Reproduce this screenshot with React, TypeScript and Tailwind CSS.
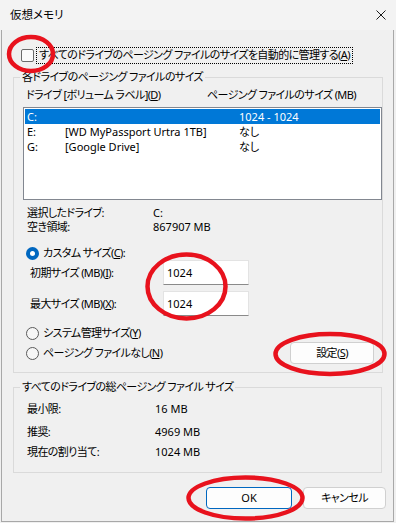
import React from 'react'

// 仮想メモリ dialog (Windows 11 style) with red annotation marks

const Key = ({ k }: { k: string }) => (
  <>
    (<span className="underline underline-offset-[1px]">{k}</span>)
  </>
)

function Radio({ checked }: { checked?: boolean }) {
  if (checked) {
    return (
      <span className="w-[13px] h-[13px] rounded-full bg-[#0067c0] flex items-center justify-center shrink-0">
        <span className="w-[5px] h-[5px] rounded-full bg-white" />
      </span>
    )
  }
  return <span className="w-[13px] h-[13px] rounded-full border border-[#5a5a5a] bg-[#f6f6f6] shrink-0" />
}

function GroupBox({ title, className, children }: { title: string; className: string; children: React.ReactNode }) {
  return (
    <fieldset className={`ml-[11px] w-[369px] border border-[#dadada] ${className}`}>
      <legend className="ml-[6px] px-[2px] h-[16px] leading-[16px]">{title}</legend>
      {children}
    </fieldset>
  )
}

const drives = [
  { d: 'C:', label: '', size: '1024 - 1024', selected: true },
  { d: 'E:', label: '[WD MyPassport Urtra 1TB]', size: 'なし' },
  { d: 'G:', label: '[Google Drive]', size: 'なし' },
]

export default function App() {
  return (
    <div className="relative w-[396px] h-[523px] bg-[#f0f0f0] text-black text-[11px] leading-[16px] tracking-[-0.6px] whitespace-nowrap font-['Noto_Sans','Noto_Sans_CJK_JP',sans-serif] [font-feature-settings:'palt'] overflow-hidden">
      {/* Title bar */}
      <div className="h-[30px] flex items-center justify-between pl-[10px] pr-[10px] bg-[#f3f3f3] text-[11.5px] tracking-normal">
        <span>仮想メモリ</span>
        <svg width="10" height="10" viewBox="0 0 10 10">
          <path d="M0.5 0.5 L9.5 9.5 M9.5 0.5 L0.5 9.5" stroke="#1a1a1a" strokeWidth="1" />
        </svg>
      </div>

      {/* Body */}
      <div className="ml-[1px] w-[393px] h-[492px] border-x border-b border-[#a8a8a8] flex flex-col">
        {/* auto manage checkbox */}
        <div className="mt-[17px] h-[16px] flex items-center">
          <span className="ml-[19px] w-[13px] h-[13px] rounded-[2px] border border-[#6b6b6b] bg-[#fbfbfb] shrink-0" />
          <span className="ml-[2px] px-[2px] h-[17px] flex items-center border border-dotted border-black">
            すべてのドライブのページング ファイルのサイズを自動的に管理する<Key k="A" />
          </span>
        </div>

        {/* per drive */}
        <GroupBox title="各ドライブのページング ファイルのサイズ" className="mt-[6px] h-[304px]">
          <div className="mt-[2px] h-[16px] flex items-center pl-[12px]">
            <span className="w-[181px]">
              ドライブ [ボリューム ラベル]<Key k="D" />
            </span>
            <span>ページング ファイルのサイズ (MB)</span>
          </div>

          <div className="mt-[4px] ml-[9px] w-[359px] h-[93px] border border-[#828790] bg-white px-[1px] pt-[1px] tracking-normal">
            {drives.map((r) => (
              <div
                key={r.d}
                className={`h-[15px] flex items-center pl-[2px] leading-[15px] ${r.selected ? 'bg-[#0078d7] text-white' : ''}`}
              >
                <span className="w-[38px]">{r.d}</span>
                <span className="w-[174px]">{r.label}</span>
                <span>{r.size}</span>
              </div>
            ))}
          </div>

          <div className="mt-[6px] pl-[13px] flex flex-col leading-[14px]">
            <div className="h-[14px] flex items-center">
              <span className="w-[126px]">選択したドライブ:</span>
              <span className="tracking-normal">C:</span>
            </div>
            <div className="h-[14px] flex items-center">
              <span className="w-[126px]">空き領域:</span>
              <span className="tracking-normal">867907 MB</span>
            </div>
          </div>

          <div className="mt-[12px] ml-[12px] h-[14px] flex items-center gap-[4px]">
            <Radio checked />
            <span>
              カスタム サイズ<Key k="C" />:
            </span>
          </div>

          <div className="h-[25px] flex items-center pl-[16px]">
            <span className="w-[133px]">
              初期サイズ (MB)<Key k="I" />:
            </span>
            <div className="w-[86px] h-[25px] bg-white border border-[#e3e3e3] border-b-[#8a8a8a] flex items-center pl-[3px] tracking-normal">
              1024
            </div>
          </div>
          <div className="mt-[6px] h-[25px] flex items-center pl-[16px]">
            <span className="w-[133px]">
              最大サイズ (MB)<Key k="X" />:
            </span>
            <div className="w-[86px] h-[25px] bg-white border border-[#e3e3e3] border-b-[#8a8a8a] flex items-center pl-[3px] tracking-normal">
              1024
            </div>
          </div>

          <div className="mt-[10px] ml-[12px] h-[14px] flex items-center gap-[4px]">
            <Radio />
            <span>
              システム管理サイズ<Key k="Y" />
            </span>
          </div>

          <div className="mt-[2px] ml-[12px] h-[22px] flex items-center gap-[4px]">
            <Radio />
            <span>
              ページング ファイルなし<Key k="N" />
            </span>
            <button className="ml-auto mr-[8px] w-[84px] h-[22px] rounded-[4px] border border-[#d0d0d0] bg-[#fdfdfd] flex items-center justify-center">
              設定<Key k="S" />
            </button>
          </div>
        </GroupBox>

        {/* totals */}
        <GroupBox title="すべてのドライブの総ページング ファイル サイズ" className="mt-[6px] h-[94px]">
          <div className="pl-[13px] flex flex-col">
            <div className="mt-[6px] h-[16px] flex items-center">
              <span className="w-[128px]">最小限:</span>
              <span className="tracking-normal">16 MB</span>
            </div>
            <div className="mt-[7px] h-[16px] flex items-center">
              <span className="w-[128px]">推奨:</span>
              <span className="tracking-normal">4969 MB</span>
            </div>
            <div className="mt-[4px] h-[16px] flex items-center">
              <span className="w-[128px]">現在の割り当て:</span>
              <span className="tracking-normal">1024 MB</span>
            </div>
          </div>
        </GroupBox>

        <div className="mt-[14px] mr-[7px] flex justify-end gap-[11px]">
          <button className="w-[86px] h-[22px] rounded-[4px] border border-[#0067c0] bg-[#fdfdfd] flex items-center justify-center tracking-normal">
            OK
          </button>
          <button className="w-[83px] h-[22px] rounded-[4px] border border-[#d0d0d0] bg-[#fdfdfd] flex items-center justify-center">
            キャンセル
          </button>
        </div>
      </div>

      {/* red annotation marks */}
      <svg className="absolute inset-0 pointer-events-none" width="396" height="523" viewBox="0 0 396 523">
        <g fill="none" stroke="#e8121d" strokeWidth="4.5">
          <ellipse cx="31" cy="54" rx="22" ry="17" />
          <ellipse cx="186.5" cy="286.5" rx="39" ry="32" />
          <ellipse cx="330" cy="354" rx="54.5" ry="20" />
          <ellipse cx="245.5" cy="498" rx="57" ry="20.5" />
        </g>
      </svg>
    </div>
  )
}
